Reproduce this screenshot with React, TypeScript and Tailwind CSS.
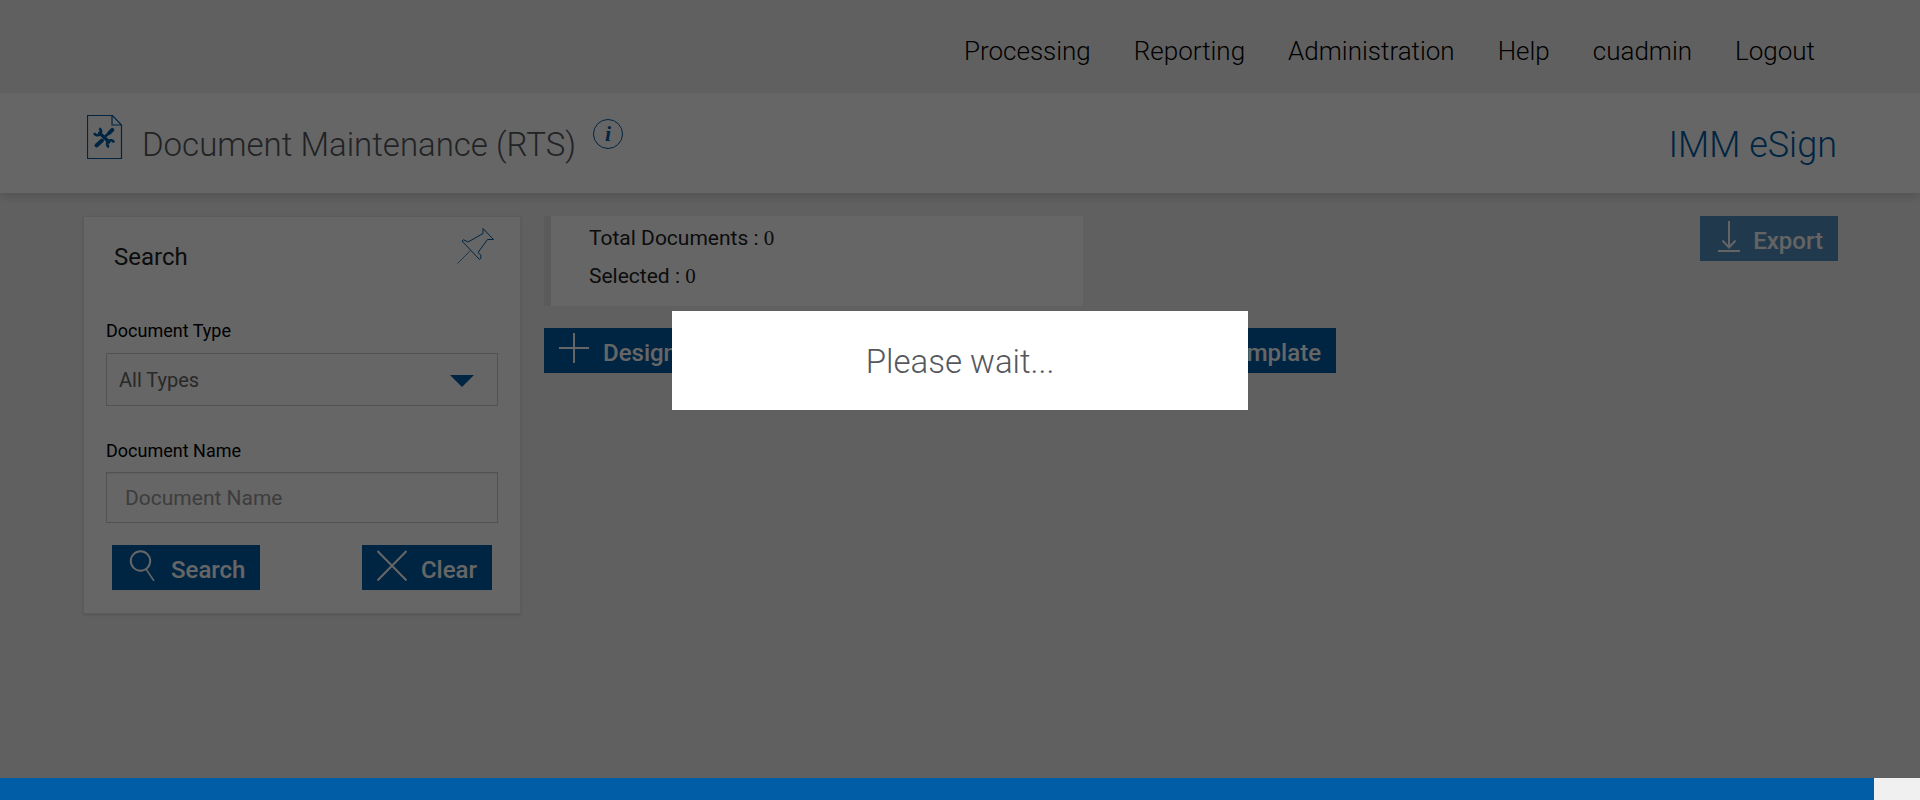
import React from "react";

type IconButtonProps = {
  label: string;
  icon: React.ReactNode;
  disabled?: boolean;
  className?: string;
};

function IconButton({ label, icon, disabled, className = "" }: IconButtonProps) {
  return (
    <button
      type="button"
      disabled={disabled}
      className={`flex h-[45px] items-start bg-[#005da6] px-[15px] text-2xl font-medium text-white disabled:opacity-65 ${className}`}
    >
      <span className="mt-[5px] mr-[14px] block">{icon}</span>
      <span className="mt-[9px] whitespace-nowrap">{label}</span>
    </button>
  );
}

const stroke = { fill: "none", stroke: "currentColor", strokeWidth: 2 } as const;

const PlusIcon = () => (
  <svg width="30" height="30" viewBox="0 0 30 30" {...stroke}>
    <path d="M15 0v30M0 15h30" />
  </svg>
);

const SearchIcon = () => (
  <svg width="30" height="31" viewBox="0 0 30 31" {...stroke}>
    <circle cx="13.500" cy="11" r="9.700" />
    <path d="M19 19l8 12" strokeWidth="1.500" />
  </svg>
);

const CloseIcon = () => (
  <svg width="30" height="31" viewBox="0 0 30 31" {...stroke}>
    <path d="M0.500 1l29 29.500M29.500 1l-29 29.500" />
  </svg>
);

const DownloadIcon = () => (
  <svg width="24" height="32" viewBox="1 0 24 32" overflow="visible" {...stroke}>
    <path d="M15 0v26M8.500 19.500l6.500 7l6.500 -7M4 30h22" />
  </svg>
);

const DocumentIcon = () => (
  <svg width="36" height="46" viewBox="0 0 36 46" fill="none" stroke="#005da6">
    <path d="M.5 1.500h25l9 9.500v33.500H.5zM25 1.500v9.500h9.500" strokeWidth="1.200" />
    <g stroke="#005da6" strokeLinecap="round">
      <path d="M12.500 19L22 28" strokeWidth="3.200" />
      <path d="M12.200 14.500a3.600 3.600 0 1 1-5 4.500" strokeWidth="2.600" strokeLinecap="butt" />
      <path d="M22 33a3.600 3.600 0 1 1 5-4.500" strokeWidth="2.600" strokeLinecap="butt" />
      <path d="M25 16.500L17 23.500" strokeWidth="2.600" />
      <path d="M25.300 15.800l-3 3M15 26.500L9.500 31.500" strokeWidth="4" />
    </g>
  </svg>
);

const PinIcon = () => (
  <svg width="40" height="38" viewBox="0 0 40 38" fill="none" stroke="#005da6">
    <path d="M6 14l1.500-1.200 4.500 2.200 15-8.500V1.500L37.500 12.500h-6L22 25.500l2.800 2.500v3.500l-1.500.8z" />
    <path d="M14.500 23.500L1.500 36.500" strokeWidth=".7" />
  </svg>
);

const navItems = ["Processing", "Reporting", "Administration", "Help", "cuadmin", "Logout"];

export default function App() {
  return (
    <div className="flex min-h-screen flex-col bg-[#f0f0f0] font-['Roboto',sans-serif] text-[#333]">
      <header>
        <nav className="flex h-[93px] items-center justify-end gap-[43px] pt-[10px] pr-[105px] text-[26px] font-light text-black">
          {navItems.map((item) => (
            <a key={item} href="#">{item}</a>
          ))}
        </nav>
        <div className="flex h-[100px] items-start bg-white pr-[83px] pl-[87px] shadow-[0_6px_8px_-2px_rgba(0,0,0,0.14)]">
          <div className="mt-[21px]"><DocumentIcon /></div>
          <h1 className="mt-[31px] ml-[19px] text-[33px] leading-[42px] font-light text-[#54585d]">Document Maintenance (RTS)</h1>
          <button
            type="button"
            aria-label="Information"
            className="mt-[26px] ml-[17px] flex size-[30px] items-center justify-center rounded-full border border-[#005da6] font-['Liberation_Serif',serif] text-[22px] leading-none font-bold text-[#005da6] italic"
          >
            i
          </button>
          <span className="mt-[31px] ml-auto text-[36px] leading-[42px] font-light text-[#005da6]">IMM eSign</span>
        </div>
      </header>

      <main className="flex items-start gap-[23px] pt-[23px] pr-[82px] pl-[83px]">
        <form className="w-[438px] border border-[#e3e3e3] bg-white px-[22px] pb-[23px] shadow-sm">
          <div className="flex h-[91px] items-start justify-between">
            <h2 className="mt-[24px] ml-[8px] text-2xl leading-[32px] font-normal text-[#222]">Search</h2>
            <button type="button" aria-label="Pin" className="mt-[10px] mr-[2px]"><PinIcon /></button>
          </div>
          <label htmlFor="doc-type" className="mt-[10px] block text-lg leading-[26px] text-black">Document Type</label>
          <div className="relative mt-[9px]">
            <select id="doc-type" className="block h-[53px] w-full appearance-none border border-[#ccc] bg-white px-3 text-xl text-[#666]">
              <option>All Types</option>
            </select>
            <svg width="24" height="12" viewBox="0 0 24 12" className="pointer-events-none absolute top-[22px] right-6">
              <path d="M0 0h24L12 12z" fill="#005da6" />
            </svg>
          </div>
          <label htmlFor="doc-name" className="mt-[32px] block text-lg leading-[26px] text-black">Document Name</label>
          <input
            id="doc-name"
            placeholder="Document Name"
            className="mt-[8px] block h-[51px] w-full border border-[#ccc] bg-white px-[18px] text-[21px] shadow-[inset_0_1px_1px_rgba(0,0,0,0.08)] placeholder:text-[#999]"
          />
          <div className="mt-[22px] flex justify-between px-[6px]">
            <IconButton label="Search" icon={<SearchIcon />} />
            <IconButton label="Clear" icon={<CloseIcon />} />
          </div>
        </form>

        <section className="flex grow flex-col items-start gap-[22px]">
          <div className="flex w-full items-start justify-between">
            <div className="h-[90px] w-[539px] border-l-[7px] border-[#e3e3e3] bg-white pt-[3px] pl-[38px] text-[21px] leading-[38px] text-[#222]">
              <p>Total Documents : <span className="font-['Liberation_Serif',serif]">0</span></p>
              <p>Selected : <span className="font-['Liberation_Serif',serif]">0</span></p>
            </div>
            <IconButton label="Export" icon={<DownloadIcon />} disabled />
          </div>
          <div className="flex w-[792px]">
            <IconButton label="Design New Template" icon={<PlusIcon />} />
            <IconButton label="Import Template" icon={<PlusIcon />} className="ml-auto" />
          </div>
        </section>
      </main>

      <div className="fixed inset-0 bg-black/60" />
      <div role="dialog" aria-label="Please wait" className="fixed top-[311px] left-[35%] flex h-[99px] w-[30%] items-center justify-center bg-white pt-[2px] text-[33px] font-light text-[#54585d]">
        Please wait...
      </div>
      <footer className="fixed inset-x-0 bottom-0 h-[22px] bg-[#f0f0f0] pr-[46px]">
        <div className="h-full bg-[#005da6]" />
      </footer>
    </div>
  );
}
